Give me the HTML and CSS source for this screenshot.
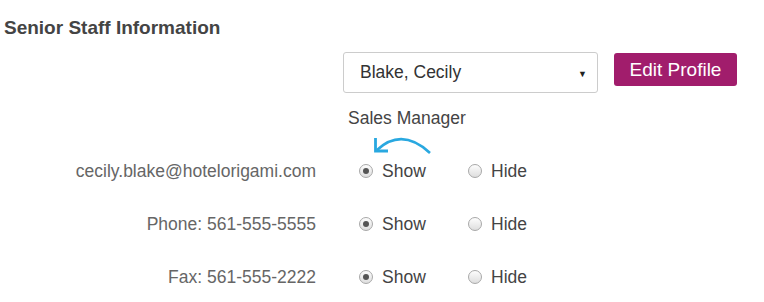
FILE: index.html
```html
<!DOCTYPE html>
<html>
<head>
<meta charset="utf-8">
<link rel="stylesheet" href="styles.css">
</head>
<body>
<h3 class="title">Senior Staff Information</h3>
<div class="form">
  <div class="label"></div>
  <div class="field picker">
    <div class="select"><span>Blake, Cecily</span><span class="caret">▼</span></div>
    <button class="btn">Edit Profile</button>
  </div>

  <div class="label"></div>
  <div class="field role">Sales Manager</div>

  <div class="label"></div>
  <div class="field arrow">
    <svg width="64" height="24" viewBox="0 0 64 24">
      <path d="M7 17 Q32 -6 60 20" fill="none" stroke="#29a8e0" stroke-width="2.6"/>
      <path d="M5.5 5 V18 H18" fill="none" stroke="#29a8e0" stroke-width="2.8"/>
    </svg>
  </div>

  <div class="label row">cecily.blake@hotelorigami.com</div>
  <div class="field row radios">
    <label class="opt"><span class="radio on"></span>Show</label>
    <label class="opt"><span class="radio"></span>Hide</label>
  </div>

  <div class="label row">Phone: 561-555-5555</div>
  <div class="field row radios">
    <label class="opt"><span class="radio on"></span>Show</label>
    <label class="opt"><span class="radio"></span>Hide</label>
  </div>

  <div class="label row last">Fax: 561-555-2222</div>
  <div class="field row radios last">
    <label class="opt"><span class="radio on"></span>Show</label>
    <label class="opt"><span class="radio"></span>Hide</label>
  </div>
</div>
</body>
</html>
```
FILE: styles.css
```css
body {
  margin: 0;
  background: #fff;
  font-family: "Liberation Sans", Arial, sans-serif;
  color: #444;
}
.title {
  margin: 0;
  padding: 17px 0 0 4px;
  font-size: 19px;
  font-weight: bold;
  color: #444;
  line-height: 22px;
}
.form {
  display: grid;
  grid-template-columns: 316px 1fr;
  column-gap: 27px;
  margin-top: 13px;
}
.label {
  text-align: right;
  font-size: 17.5px;
  color: #666;
}
.picker {
  display: flex;
  align-items: flex-start;
  gap: 16px;
}
.select {
  box-sizing: border-box;
  width: 255px;
  height: 41px;
  border: 1px solid #ccc;
  border-radius: 3px;
  display: flex;
  align-items: center;
  justify-content: space-between;
  padding: 0 10px 0 16px;
  font-size: 17.5px;
  color: #333;
}
.caret {
  font-size: 9px;
  color: #222;
  margin-top: 3px;
}
.btn {
  margin-top: 1px;
  box-sizing: border-box;
  width: 123px;
  height: 33px;
  border: none;
  border-radius: 3px;
  background: #a11d6c;
  color: #fff;
  font-family: "Liberation Sans", Arial, sans-serif;
  font-size: 19px;
  padding: 0;
}
.role {
  margin-top: 15px;
  padding-left: 5px;
  font-size: 17.5px;
  line-height: 20px;
  color: #444;
}
.arrow {
  height: 24px;
  padding-left: 27px;
  margin-top: 5px;
  margin-bottom: 4px;
}
.arrow svg { display: block; }
.row {
  height: 53px;
  line-height: 20px;
}
.row.last {
  height: 20px;
}
.radios {
  display: flex;
  padding-left: 16px;
  font-size: 17.5px;
  color: #444;
}
.opt {
  display: flex;
  align-items: center;
  width: 109px;
  height: 20px;
}
.radio {
  box-sizing: border-box;
  width: 14px;
  height: 14px;
  border-radius: 50%;
  border: 1px solid #a8a8a8;
  background: linear-gradient(#fdfdfd, #dedede);
  margin-right: 9px;
  position: relative;
}
.radio.on::after {
  content: "";
  position: absolute;
  left: 3px;
  top: 3px;
  width: 6px;
  height: 6px;
  border-radius: 50%;
  background: #555;
}
```
